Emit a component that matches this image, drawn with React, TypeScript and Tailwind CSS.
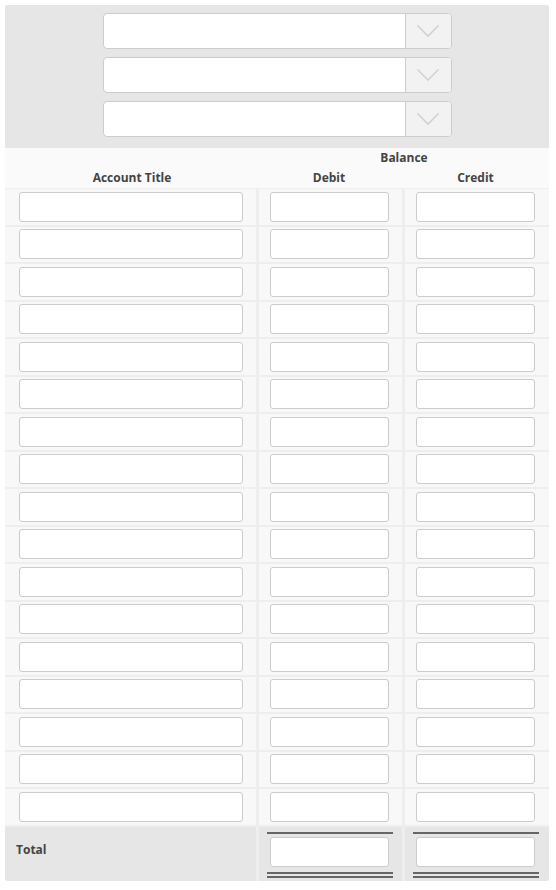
const ROWS = Array.from({ length: 17 }, (_, i) => i);

function Select() {
  return (
    <div className="flex h-[36px] w-[349px] overflow-hidden rounded-[4px] border border-[#cccccc] bg-white">
      <div className="flex-1" />
      <div className="flex w-[46px] items-center justify-center border-l border-[#cccccc] bg-[#f2f2f2]">
        <svg width="24" height="14" viewBox="0 0 24 14" fill="none">
          <polyline points="1.5,1.5 12,12 22.5,1.5" stroke="#d2d2d2" strokeWidth="1.6" />
        </svg>
      </div>
    </div>
  );
}

function Field({ w }: { w: string }) {
  return <div className={`h-[30px] rounded-[3px] border border-[#cccccc] bg-white ${w}`} />;
}

export default function App() {
  return (
    <div className="p-[5px]" style={{ fontFamily: '"Open Sans", "Liberation Sans", sans-serif' }}>
      <div className="w-[544px] overflow-hidden rounded-[3px] bg-[#eeeeee]">
        <div className="flex flex-col items-center gap-[8px] bg-[#e6e6e6] pt-[8px] pb-[11px]">
          <Select />
          <Select />
          <Select />
        </div>

        <div className="grid h-[40px] grid-cols-[254px_290px] bg-[#fafafa] text-[12px] font-bold text-[#444444]">
          <div className="flex items-end justify-center pb-[1px]">Account Title</div>
          <div className="flex flex-col">
            <div className="flex h-[20px] items-center justify-center">Balance</div>
            <div className="grid grid-cols-[143px_147px]">
              <div className="flex h-[20px] items-center justify-center pr-[3px]">Debit</div>
              <div className="flex h-[20px] items-center justify-center">Credit</div>
            </div>
          </div>
        </div>

        <div className="flex flex-col gap-[2px] pt-[1px]">
          {ROWS.map(r => (
            <div key={r} className="grid h-[35.5px] grid-cols-[251px_143px_144px] gap-x-[3px]">
              <div className="flex items-center bg-[#f8f8f8] pl-[14px]"><Field w="w-[224px]" /></div>
              <div className="flex items-center bg-[#f8f8f8] pl-[11px]"><Field w="w-[119px]" /></div>
              <div className="flex items-center bg-[#f8f8f8] pl-[11px]"><Field w="w-[119px]" /></div>
            </div>
          ))}
        </div>

        <div className="mt-[2px] grid h-[54px] grid-cols-[251px_143px_144px] gap-x-[3px]">
          <div className="flex items-center bg-[#e6e6e6] pb-[7px] pl-[11px] text-[12px] font-bold text-[#444444]">Total</div>
          {[0, 1].map(c => (
            <div key={c} className="flex flex-col bg-[#e6e6e6] pt-[5px] pl-[8px]">
              <div className="h-[2px] w-[126px] bg-[#666666]" />
              <div className="mt-[3px] pl-[3px]"><Field w="w-[119px]" /></div>
              <div className="mt-[5px] h-[2px] w-[126px] bg-[#666666]" />
              <div className="mt-[2px] h-[2px] w-[126px] bg-[#666666]" />
            </div>
          ))}
        </div>
      </div>
    </div>
  );
}
